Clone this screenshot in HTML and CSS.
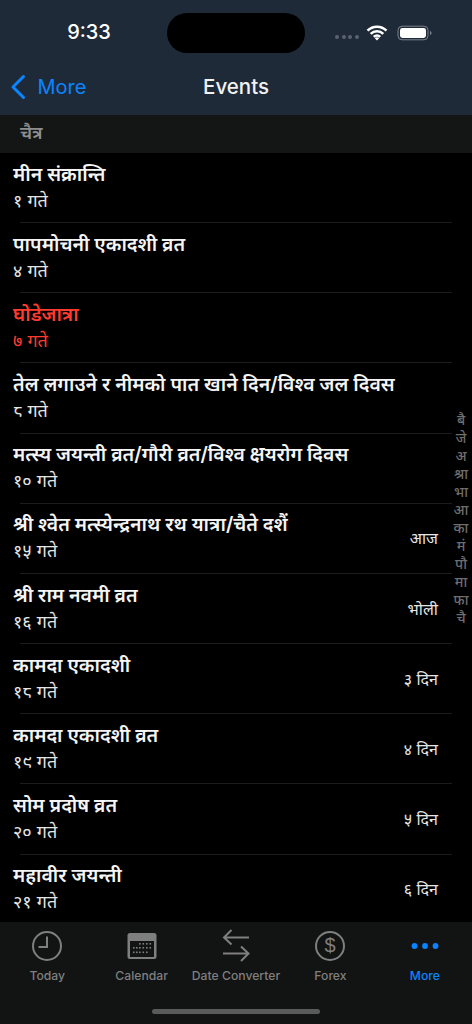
FILE: index.html
```html
<!DOCTYPE html>
<html lang="ne">
<head>
<meta charset="utf-8">
<title>Events</title>
<link rel="stylesheet" href="styles.css">
</head>
<body>
<div class="screen">
  <header class="top">
    <div class="status">
      <span class="time">9:33</span>
      <div class="island"></div>
      <div class="status-right">
        <div class="signal"><i></i><i></i><i></i><i></i></div>
        <svg class="wifi" width="22" height="16" viewBox="0 0 22 16"><path d="M1.500 5.600a13.600 13.600 0 0 1 19 0M4.700 8.900a9 9 0 0 1 12.600 0M7.800 11.900a4.600 4.600 0 0 1 6.400 0" fill="none" stroke="#fff" stroke-width="2.500"/><path d="M11 15.600l-2.200-2.300a3.100 3.100 0 0 1 4.400 0z" fill="#fff"/></svg>
        <svg class="battery" width="35" height="16" viewBox="0 0 35 16"><rect x="1" y="1.200" width="30" height="13.600" rx="4" fill="none" stroke="#7b838c" stroke-width="1"/><rect x="3" y="3" width="26" height="10" rx="2.400" fill="#fff"/><path d="M33 6v4c.9-.3 1.500-1 1.500-2s-.6-1.700-1.500-2z" fill="#7b838c"/></svg>
      </div>
    </div>
    <nav class="nav">
      <a class="back">
        <svg width="16" height="26" viewBox="0 0 16 26"><path d="M13.500 2.500L3 13l10.500 10.500" fill="none" stroke="#0a84ff" stroke-width="3" stroke-linecap="round" stroke-linejoin="round"/></svg>
        <span>More</span>
      </a>
      <h1>Events</h1>
    </nav>
  </header>

  <div class="section">चैत्र</div>

  <main class="list">
    <div class="row"><div class="text"><div class="title">मीन संक्रान्ति</div><div class="sub">१ गते</div></div></div>
    <div class="row"><div class="text"><div class="title">पापमोचनी एकादशी व्रत</div><div class="sub">४ गते</div></div></div>
    <div class="row holiday"><div class="text"><div class="title">घोडेजात्रा</div><div class="sub">७ गते</div></div></div>
    <div class="row"><div class="text"><div class="title">तेल लगाउने र नीमको पात खाने दिन/विश्व जल दिवस</div><div class="sub">८ गते</div></div></div>
    <div class="row"><div class="text"><div class="title">मत्स्य जयन्ती व्रत/गौरी व्रत/विश्व क्षयरोग दिवस</div><div class="sub">१० गते</div></div></div>
    <div class="row"><div class="text"><div class="title">श्री श्वेत मत्स्येन्द्रनाथ रथ यात्रा/चैते दशैं</div><div class="sub">१५ गते</div></div><span class="when">आज</span></div>
    <div class="row"><div class="text"><div class="title">श्री राम नवमी व्रत</div><div class="sub">१६ गते</div></div><span class="when">भोली</span></div>
    <div class="row"><div class="text"><div class="title">कामदा एकादशी</div><div class="sub">१८ गते</div></div><span class="when">३ दिन</span></div>
    <div class="row"><div class="text"><div class="title">कामदा एकादशी व्रत</div><div class="sub">१९ गते</div></div><span class="when">४ दिन</span></div>
    <div class="row"><div class="text"><div class="title">सोम प्रदोष व्रत</div><div class="sub">२० गते</div></div><span class="when">५ दिन</span></div>
    <div class="row"><div class="text"><div class="title">महावीर जयन्ती</div><div class="sub">२१ गते</div></div><span class="when">६ दिन</span></div>
    <aside class="index">
      <span>बै</span><span>जे</span><span>अ</span><span>श्रा</span><span>भा</span><span>आ</span><span>का</span><span>मं</span><span>पौ</span><span>मा</span><span>फा</span><span>चै</span>
    </aside>
  </main>

  <footer class="tabbar">
    <div class="tabs">
      <div class="tab">
        <svg width="32" height="32" viewBox="0 0 32 32"><circle cx="16" cy="16" r="14" fill="none" stroke="#7f7f7f" stroke-width="2"/><path d="M16 6.500V17H7.500" fill="none" stroke="#7f7f7f" stroke-width="2"/></svg>
        <span>Today</span>
      </div>
      <div class="tab">
        <svg width="30" height="28" viewBox="0 0 30 28"><rect x="0.500" y="1" width="29" height="26" rx="2.500" fill="#7f7f7f"/><rect x="3" y="9" width="24" height="16" fill="#121313"/><g fill="#7f7f7f"><rect x="12" y="11" width="1.600" height="1.600"/><rect x="15.500" y="11" width="1.600" height="1.600"/><rect x="19" y="11" width="1.600" height="1.600"/><rect x="22.500" y="11" width="1.600" height="1.600"/><rect x="6" y="15" width="1.600" height="1.600"/><rect x="9" y="15" width="1.600" height="1.600"/><rect x="12" y="15" width="1.600" height="1.600"/><rect x="15.500" y="15" width="1.600" height="1.600"/><rect x="19" y="15" width="1.600" height="1.600"/><rect x="22.500" y="15" width="1.600" height="1.600"/><rect x="6" y="19.500" width="1.600" height="1.600"/><rect x="9" y="19.500" width="1.600" height="1.600"/><rect x="12" y="19.500" width="1.600" height="1.600"/><rect x="15.500" y="19.500" width="1.600" height="1.600"/><rect x="19" y="19.500" width="1.600" height="1.600"/></g></svg>
        <span>Calendar</span>
      </div>
      <div class="tab">
        <svg width="30" height="34" viewBox="0 0 30 34"><path d="M28 8.500H3M10.500 1L3 8.500l7.500 7M2 24.500h25.500M20 17.500l7.500 7-7.500 7.500" fill="none" stroke="#7f7f7f" stroke-width="2"/></svg>
        <span>Date Converter</span>
      </div>
      <div class="tab">
        <svg width="32" height="32" viewBox="0 0 32 32"><circle cx="16" cy="16" r="14" fill="none" stroke="#7f7f7f" stroke-width="2"/><text x="16" y="22" class="dollar">$</text></svg>
        <span>Forex</span>
      </div>
      <div class="tab active">
        <svg width="28" height="32" viewBox="0 0 28 32"><circle cx="3.500" cy="16" r="2.900" fill="#0a84ff"/><circle cx="14" cy="16" r="2.900" fill="#0a84ff"/><circle cx="24.500" cy="16" r="2.900" fill="#0a84ff"/></svg>
        <span>More</span>
      </div>
    </div>
    <div class="home"></div>
  </footer>
</div>
</body>
</html>
```

FILE: styles.css
```css
* { box-sizing: border-box; }
html, body { margin: 0; padding: 0; background: #000; }
body { font-family: Inter, Roboto, "Noto Sans", "Noto Sans Devanagari", "Liberation Sans", sans-serif; }
.screen { width: 472px; height: 1024px; display: flex; flex-direction: column; overflow: hidden; background: #000; color: #fff; }

.top { background: #1e2a38; height: 115px; flex: none; }
.status { height: 66px; display: flex; align-items: flex-start; padding-top: 13px; position: relative; }
.time { width: 178px; text-align: center; font-size: 20px; font-weight: 500; line-height: 38px; color: #fff; }
.island { width: 138px; height: 40px; margin-left: -11px; border-radius: 20px; background: #000; }
.status-right { display: flex; align-items: center; height: 40px; margin-left: 30px; }
.signal { display: flex; gap: 2.400px; margin-top: 8px; }
.signal i { width: 4.200px; height: 4.200px; border-radius: 50%; background: #5a636e; }
.wifi { margin-left: 7px; margin-top: -1px; }
.battery { margin-left: 9px; margin-top: -1px; }

.nav { position: relative; height: 49px; padding-bottom: 9px; display: flex; align-items: center; justify-content: center; }
.nav h1 { margin: 0; font-size: 20.500px; font-weight: 500; color: #f2f2f2; }
.back { position: absolute; left: 10px; top: 8px; display: flex; align-items: center; gap: 11.500px; color: #0a84ff; font-size: 20px; }

.section { height: 38px; flex: none; background: #141515; color: #8e8e8e; font-size: 18px; font-weight: 600; line-height: 36px; padding-left: 20px; }

.list { position: relative; flex: none; height: 769px; overflow: hidden; }
.row { height: 70.170px; margin-left: 13px; padding-bottom: 1px; display: flex; align-items: center; position: relative; padding-right: 34px; }
.row::after { content: ""; position: absolute; left: 7px; width: 432px; bottom: 0; height: 1px; background: #1c1c1e; }
.row:nth-last-child(2)::after { display: none; }
.text { flex: 1; min-width: 0; }
.title { font-size: 19.450px; font-weight: 600; line-height: 25px; color: #f5f5f5; white-space: nowrap; }
.sub { font-size: 18px; line-height: 27px; color: #e6e6e6; white-space: nowrap; }
.holiday .title, .holiday .sub { color: #ff3b30; }
.when { font-size: 16px; color: #e6e6e6; white-space: nowrap; }
.index { position: absolute; right: 0; top: 258px; width: 22px; display: flex; flex-direction: column; align-items: center; color: #6e6e6e; font-size: 14px; font-weight: 500; }
.index span { height: 18px; line-height: 18px; }

.tabbar { flex: 1; background: #121313; display: flex; flex-direction: column; }
.tabs { display: flex; height: 68px; padding-top: 6px; }
.tab { flex: 1; display: flex; flex-direction: column; align-items: center; color: #7f7f7f; font-size: 12.200px; font-weight: 500; }
.tab svg { height: 36px; flex: none; }
.tab span { margin-top: 3px; line-height: 18px; white-space: nowrap; }
.tab.active { color: #0a84ff; }
.dollar { font-size: 20px; fill: #7f7f7f; text-anchor: middle; font-family: "Liberation Sans", sans-serif; }
.home { width: 168px; height: 5px; border-radius: 3px; background: #5a5a5a; margin: 19px auto 0; }
```
